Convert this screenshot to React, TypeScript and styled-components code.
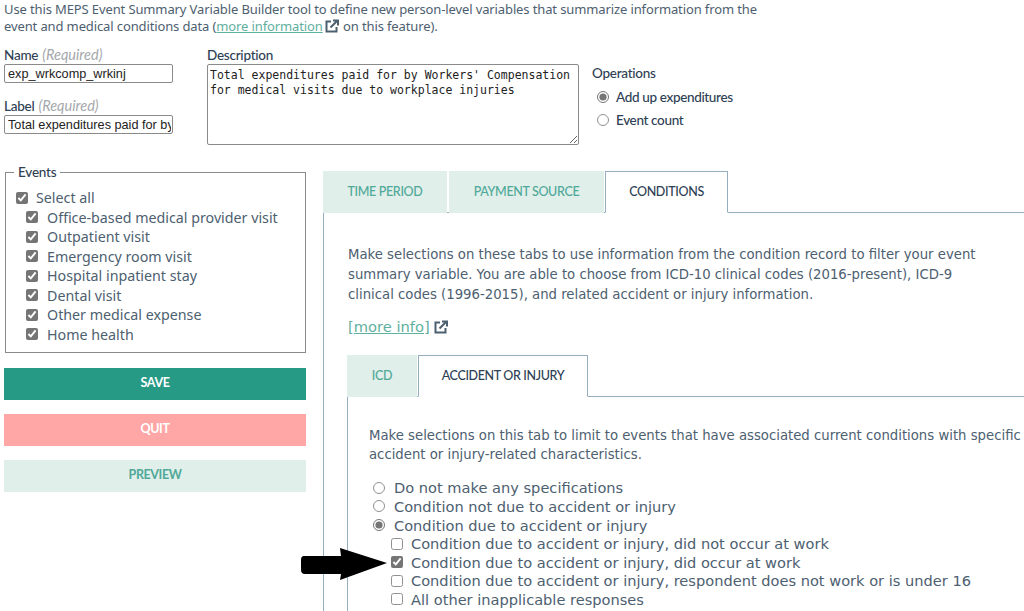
import * as React from "react";
import styled, { createGlobalStyle } from "styled-components";

const GlobalStyle = createGlobalStyle`
  html, body {
    margin: 0;
    height: 611px;
    overflow: hidden;
    background: #fff;
  }
  body {
    font-family: "Noto Sans", "Open Sans", sans-serif;
    color: #2e4053;
  }
`;

const Page = styled.div`
  width: 1024px;
  height: 611px;
  overflow: hidden;
  position: relative;
  padding: 1px 0 0 4px;
  box-sizing: border-box;
`;

const Intro = styled.p`
  margin: 0;
  width: 770px;
  font-size: 13px;
  letter-spacing: -0.12px;
  line-height: 17px;
  color: #4d6070;
`;

const Link = styled.span`
  color: #5fb0a0;
  text-decoration: underline;
`;

const FormRow = styled.div`
  display: flex;
  margin-top: 11px;
  height: 118px;
`;

const NameColumn = styled.div`
  width: 203px;
  flex-shrink: 0;
`;

const FieldLabel = styled.label`
  display: block;
  font-family: "Lato", sans-serif;
  font-size: 13.5px;
  letter-spacing: -0.25px;
  line-height: 18px;
  font-weight: 500;
  color: #2e4053;
`;

const Required = styled.em`
  font-size: 14.5px;
  letter-spacing: 0;
  font-weight: 400;
  color: #a5a9ad;
  margin-left: 4px;
`;

const TextField = styled.input`
  display: block;
  box-sizing: border-box;
  width: 169px;
  height: 19px;
  margin: 0 0 14px;
  padding: 0 1px 0 3px;
  border: 1px solid #8a8a8a;
  border-radius: 2px;
  font-family: "Liberation Sans", Arial, sans-serif;
  font-size: 12.7px;
  color: #222;
  outline: none;
`;

const DescriptionColumn = styled.div`
  width: 385px;
  flex-shrink: 0;
`;

const DescriptionBox = styled.textarea`
  display: block;
  box-sizing: border-box;
  width: 372px;
  height: 81px;
  margin: 0;
  padding: 3px 2px 2px;
  border: 1px solid #8a8a8a;
  border-radius: 2px;
  font-family: "DejaVu Sans Mono", monospace;
  font-size: 11.5px;
  line-height: 15px;
  color: #222;
  outline: none;
`;

const OperationsColumn = styled.div`
  padding-top: 18px;
`;

const OperationLabel = styled.div`
  font-family: "Lato", sans-serif;
  font-size: 13.5px;
  letter-spacing: -0.25px;
  line-height: 18px;
  font-weight: 500;
`;

const OperationOption = styled.label`
  display: flex;
  align-items: center;
  gap: 7px;
  height: 23px;
  margin-left: 5px;
  font-family: "Lato", sans-serif;
  font-size: 13.5px;
  letter-spacing: -0.35px;
  font-weight: 500;
  color: #2e4053;
  &:first-of-type {
    margin-top: 3px;
  }
`;

const Radio = styled.input.attrs({ type: "radio", readOnly: true })`
  width: 12px;
  height: 12px;
  margin: 0;
  flex-shrink: 0;
  accent-color: #757575;
  &:not(:checked) {
    opacity: 0.8;
  }
`;

const Check = styled.input.attrs({ type: "checkbox", readOnly: true })`
  width: 12px;
  height: 12px;
  margin: 0;
  flex-shrink: 0;
  accent-color: #757575;
  &:not(:checked) {
    opacity: 0.8;
  }
`;

const Columns = styled.div`
  display: flex;
`;

const Sidebar = styled.div`
  width: 302px;
  flex-shrink: 0;
  margin-right: 17px;
`;

const EventsBox = styled.fieldset`
  box-sizing: border-box;
  width: 301px;
  height: 189px;
  margin: 0 0 0 1px;
  padding: 7px 10px 0;
  border: 1px solid #8a8a8a;
`;

const EventsLegend = styled.legend`
  margin-left: -2px;
  padding: 0 4px;
  font-family: "Lato", sans-serif;
  font-size: 13.5px;
  letter-spacing: -0.2px;
  line-height: 17px;
  font-weight: 500;
`;

const EventRow = styled.label<{ $nested?: boolean }>`
  display: flex;
  align-items: center;
  gap: ${(p) => (p.$nested ? "9px" : "8px")};
  height: 19.5px;
  margin-left: ${(p) => (p.$nested ? "10px" : "0")};
  font-size: 14.25px;
  color: #4d6070;
`;

const Actions = styled.div`
  margin-top: 15px;
`;

const ActionButton = styled.button<{ $bg: string; $fg: string }>`
  display: block;
  width: 302px;
  height: 32px;
  margin: 0 0 14px;
  border: 0;
  padding: 0 0 3px;
  background: ${(p) => p.$bg};
  color: ${(p) => p.$fg};
  font-family: "Lato", sans-serif;
  font-size: 12.5px;
  letter-spacing: -0.4px;
  font-weight: 700;
`;

const RightColumn = styled.div`
  padding-top: 7px;
`;

const TabRow = styled.div`
  display: flex;
  gap: 2px;
  align-items: flex-end;
  margin-bottom: -1px;
  position: relative;
`;

const SubTabRow = styled(TabRow)`
  gap: 1px;
  margin-left: -1px;
`;

const Tab = styled.div<{ $active?: boolean; $width: number }>`
  box-sizing: border-box;
  width: ${(p) => p.$width}px;
  height: 42px;
  display: flex;
  align-items: center;
  justify-content: center;
  padding-bottom: 2px;
  font-family: "Lato", sans-serif;
  font-size: 12.5px;
  letter-spacing: -0.35px;
  font-weight: 500;
  background: ${(p) => (p.$active ? "#fff" : "#e0efea")};
  color: ${(p) => (p.$active ? "#2e4053" : "#4fa898")};
  border: ${(p) => (p.$active ? "1px solid #94aec0" : "0")};
  border-bottom: ${(p) => (p.$active ? "1px solid #fff" : "0")};
  margin-left: ${(p) => (p.$active && p.$width === 123 ? "-1px" : "0")};
`;

const Panel = styled.div`
  border-top: 1px solid #94aec0;
  border-left: 1px solid #94aec0;
  padding: 32px 0 0 24px;
  width: 701px;
  box-sizing: border-box;
  height: 400px;
`;

const Paragraph = styled.p`
  margin: 0;
  width: 650px;
  font-family: "DejaVu Sans", Verdana, sans-serif;
  font-size: 13.25px;
  line-height: 19.8px;
  color: #4d6070;
`;

const MoreInfo = styled.div`
  display: flex;
  align-items: center;
  gap: 2px;
  margin: 13px 0 18px;
  font-family: "DejaVu Sans", Verdana, sans-serif;
  font-size: 14.7px;
  line-height: 20px;
`;

const InlineIcon = styled.svg`
  width: 14px;
  height: 14px;
  margin: 0 1px 0 2px;
  vertical-align: -2px;
  color: #4d6070;
`;

const InnerPanel = styled(Panel)`
  margin-left: -1px;
  padding: 29px 0 0 21px;
  width: 677px;
`;

const InnerParagraph = styled(Paragraph)`
  width: 655px;
  line-height: 19px;
`;

const Choices = styled.div`
  margin-top: 14.2px;
  font-family: "DejaVu Sans", Verdana, sans-serif;
  font-size: 14.6px;
  color: #4d6070;
`;

const Choice = styled.label<{ $nested?: boolean }>`
  display: flex;
  align-items: center;
  gap: ${(p) => (p.$nested ? "8px" : "9px")};
  height: 18.6px;
  white-space: nowrap;
  margin-left: ${(p) => (p.$nested ? "22px" : "4px")};
`;

const Arrow = styled.svg`
  position: absolute;
  left: 301px;
  top: 546px;
  width: 86px;
  height: 36px;
`;

const ExternalIcon = () => (
  <InlineIcon viewBox="0 0 14 14" fill="none" stroke="currentColor" strokeWidth="2">
    <path d="M6 2.5H1.5v10h10V8" />
    <path d="M5.5 8.5 12 2M8 1.5h5v5" />
  </InlineIcon>
);

const EVENTS = [
  "Office-based medical provider visit",
  "Outpatient visit",
  "Emergency room visit",
  "Hospital inpatient stay",
  "Dental visit",
  "Other medical expense",
  "Home health",
];

const App: React.FC = () => (
  <>
    <GlobalStyle />
    <Page>
      <Intro>
        Use this MEPS Event Summary Variable Builder tool to define new person-level variables that
        summarize information from the event and medical conditions data (
        <Link>more information</Link>
        <ExternalIcon /> on this feature).
      </Intro>
      <FormRow>
        <NameColumn>
          <FieldLabel>
            Name<Required>(Required)</Required>
          </FieldLabel>
          <TextField readOnly value="exp_wrkcomp_wrkinj" />
          <FieldLabel>
            Label<Required>(Required)</Required>
          </FieldLabel>
          <TextField readOnly value="Total expenditures paid for by Workers' Compensation" />
        </NameColumn>
        <DescriptionColumn>
          <FieldLabel>Description</FieldLabel>
          <DescriptionBox
            readOnly
            value="Total expenditures paid for by Workers' Compensation for medical visits due to workplace injuries"
          />
        </DescriptionColumn>
        <OperationsColumn>
          <OperationLabel>Operations</OperationLabel>
          <OperationOption>
            <Radio checked name="operation" />
            Add up expenditures
          </OperationOption>
          <OperationOption>
            <Radio name="operation" />
            Event count
          </OperationOption>
        </OperationsColumn>
      </FormRow>
      <Columns>
        <Sidebar>
          <EventsBox>
            <EventsLegend>Events</EventsLegend>
            <EventRow>
              <Check checked />
              Select all
            </EventRow>
            {EVENTS.map((name) => (
              <EventRow $nested key={name}>
                <Check checked />
                {name}
              </EventRow>
            ))}
          </EventsBox>
          <Actions>
            <ActionButton $bg="#269a85" $fg="#fff">SAVE</ActionButton>
            <ActionButton $bg="#ffa6a6" $fg="#fff">QUIT</ActionButton>
            <ActionButton $bg="#e0efea" $fg="#4fa898">PREVIEW</ActionButton>
          </Actions>
        </Sidebar>
        <RightColumn>
          <TabRow>
            <Tab $width={124}>TIME PERIOD</Tab>
            <Tab $width={155}>PAYMENT SOURCE</Tab>
            <Tab $active $width={123}>CONDITIONS</Tab>
          </TabRow>
          <Panel>
            <Paragraph>
              Make selections on these tabs to use information from the condition record to filter
              your event summary variable. You are able to choose from ICD-10 clinical codes
              (2016-present), ICD-9 clinical codes (1996-2015), and related accident or injury
              information.
            </Paragraph>
            <MoreInfo>
              <Link>[more info]</Link>
              <ExternalIcon />
            </MoreInfo>
            <SubTabRow>
              <Tab $width={70}>ICD</Tab>
              <Tab $active $width={170}>ACCIDENT OR INJURY</Tab>
            </SubTabRow>
            <InnerPanel>
              <InnerParagraph>
                Make selections on this tab to limit to events that have associated current
                conditions with specific accident or injury-related characteristics.
              </InnerParagraph>
              <Choices>
                <Choice>
                  <Radio name="injury" />
                  Do not make any specifications
                </Choice>
                <Choice>
                  <Radio name="injury" />
                  Condition not due to accident or injury
                </Choice>
                <Choice>
                  <Radio checked name="injury" />
                  Condition due to accident or injury
                </Choice>
                <Choice $nested>
                  <Check />
                  Condition due to accident or injury, did not occur at work
                </Choice>
                <Choice $nested>
                  <Check checked />
                  Condition due to accident or injury, did occur at work
                </Choice>
                <Choice $nested>
                  <Check />
                  Condition due to accident or injury, respondent does not work or is under 16
                </Choice>
                <Choice $nested>
                  <Check />
                  All other inapplicable responses
                </Choice>
              </Choices>
            </InnerPanel>
          </Panel>
        </RightColumn>
      </Columns>
      <Arrow viewBox="0 0 86 36">
        <path
          d="M3 10 H40 L39 2 L86 17 L39 34 L40 28 H4 C1 28 0 26 0 24 V14 C0 11 1 10 3 10Z"
          fill="#000"
        />
      </Arrow>
    </Page>
  </>
);

export default App;
